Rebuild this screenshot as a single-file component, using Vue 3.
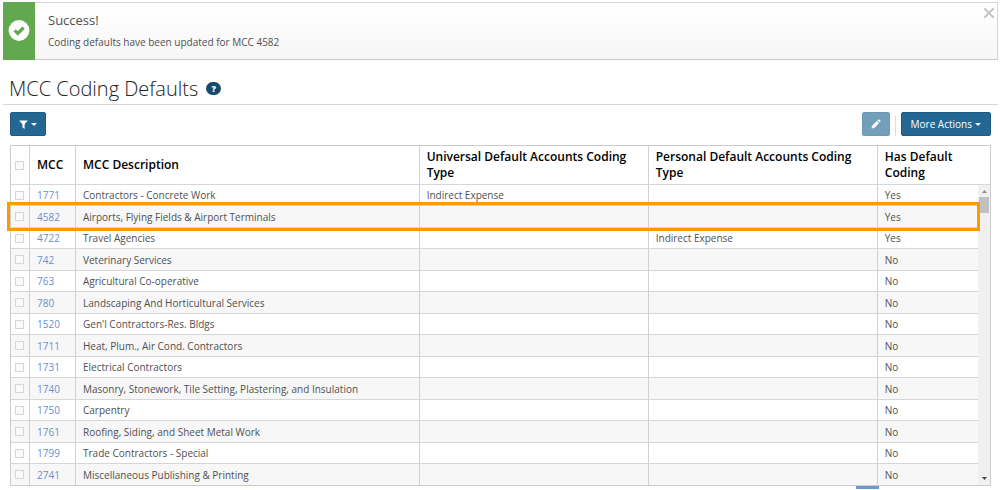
<script setup>
import { ref } from 'vue'

const rows = ref([
  { mcc: '1771', description: 'Contractors - Concrete Work', universal: 'Indirect Expense', personal: '', coded: 'Yes' },
  { mcc: '4582', description: 'Airports, Flying Fields & Airport Terminals', universal: '', personal: '', coded: 'Yes', highlighted: true },
  { mcc: '4722', description: 'Travel Agencies', universal: '', personal: 'Indirect Expense', coded: 'Yes' },
  { mcc: '742', description: 'Veterinary Services', coded: 'No' },
  { mcc: '763', description: 'Agricultural Co-operative', coded: 'No' },
  { mcc: '780', description: 'Landscaping And Horticultural Services', coded: 'No' },
  { mcc: '1520', description: "Gen'l Contractors-Res. Bldgs", coded: 'No' },
  { mcc: '1711', description: 'Heat, Plum., Air Cond. Contractors', coded: 'No' },
  { mcc: '1731', description: 'Electrical Contractors', coded: 'No' },
  { mcc: '1740', description: 'Masonry, Stonework, Tile Setting, Plastering, and Insulation', coded: 'No' },
  { mcc: '1750', description: 'Carpentry', coded: 'No' },
  { mcc: '1761', description: 'Roofing, Siding, and Sheet Metal Work', coded: 'No' },
  { mcc: '1799', description: 'Trade Contractors - Special', coded: 'No' },
  { mcc: '2741', description: 'Miscellaneous Publishing & Printing', coded: 'No' },
])
</script>

<template>
  <main class="page">
    <section class="alert" role="status">
      <div class="alert-badge">
        <svg width="22" height="22" viewBox="0 0 22 22" aria-hidden="true">
          <circle cx="11" cy="10.5" r="10.4" fill="#fff" />
          <path d="M6.6 10.4 9.8 13.5 15.6 7.7" fill="none" stroke="#62a84f" stroke-width="3.2" />
        </svg>
      </div>
      <div class="alert-text">
        <strong class="alert-title">Success!</strong>
        <p class="alert-message">Coding defaults have been updated for MCC 4582</p>
      </div>
      <button class="alert-close" type="button" aria-label="Dismiss">
        <svg width="12" height="12" viewBox="0 0 12 12" aria-hidden="true">
          <path d="M1.2 1.2 10.8 10.8M10.8 1.2 1.2 10.8" stroke="#c6c6c6" stroke-width="2" />
        </svg>
      </button>
    </section>

    <header class="heading">
      <h1>MCC Coding Defaults</h1>
      <button class="help" type="button" aria-label="Help">?</button>
    </header>

    <div class="toolbar">
      <button class="btn filter" type="button" aria-label="Filter">
        <svg width="9" height="9" viewBox="0 0 9 9" aria-hidden="true">
          <path d="M.2.5h8.6L5.6 4.2V9L3.4 7.2v-3z" fill="#fff" />
        </svg>
        <svg class="caret" width="6" height="3" viewBox="0 0 6 3" aria-hidden="true"><path d="M0 0h6L3 3z" fill="#fff" /></svg>
      </button>
      <div class="actions">
        <button class="btn edit" type="button" aria-label="Edit" disabled>
          <svg width="10" height="10" viewBox="0 0 10 10" aria-hidden="true">
            <path d="M.5 9.5 1 6.9 5.8 2.1l2.1 2.1L3.1 9zM6.4 1.5 7.3.6q.4-.4.9 0L9.4 1.8q.4.5 0 .9l-.9.9z" fill="#fff" />
          </svg>
        </button>
        <span class="divider"></span>
        <button class="btn more" type="button">
          More Actions
          <svg class="caret" width="6" height="3" viewBox="0 0 6 3" aria-hidden="true"><path d="M0 0h6L3 3z" fill="#fff" /></svg>
        </button>
      </div>
    </div>

    <div class="grid">
      <table>
        <colgroup>
          <col class="col-check" />
          <col class="col-mcc" />
          <col class="col-description" />
          <col class="col-type" />
          <col class="col-type" />
          <col class="col-coded" />
        </colgroup>
        <thead>
          <tr>
            <th class="check"><input type="checkbox" aria-label="Select all" /></th>
            <th>MCC</th>
            <th>MCC Description</th>
            <th>Universal Default Accounts Coding Type</th>
            <th>Personal Default Accounts Coding Type</th>
            <th>Has Default Coding</th>
          </tr>
        </thead>
        <tbody>
          <tr v-for="row in rows" :key="row.mcc" :class="{ highlighted: row.highlighted }">
            <td class="check"><input type="checkbox" :aria-label="'Select ' + row.mcc" /></td>
            <td><a href="#">{{ row.mcc }}</a></td>
            <td>{{ row.description }}</td>
            <td>{{ row.universal }}</td>
            <td>{{ row.personal }}</td>
            <td>{{ row.coded }}</td>
          </tr>
        </tbody>
      </table>
      <div class="scrollbar" aria-hidden="true">
        <svg width="5" height="3" viewBox="0 0 5 3"><path d="M0 3h5L2.5 0z" fill="#8c8c8c" /></svg>
        <span class="thumb"></span>
        <svg class="down" width="5" height="3" viewBox="0 0 5 3"><path d="M0 0h5L2.5 3z" fill="#444" /></svg>
      </div>
    </div>
    <div class="pager"><span class="pager-tab"></span></div>
  </main>
</template>

<style>
html,
body {
  background: #fff;
  overflow: hidden;
}
</style>

<style scoped>
.page {
  padding: 2px 2px 0 3px;
  font-family: "Open Sans", "Noto Sans", sans-serif;
  font-size: 10px;
  line-height: 14px;
  color: #505050;
}
button {
  font-family: inherit;
  border: 0;
  padding: 0;
  cursor: pointer;
}
svg {
  display: block;
}
.alert {
  display: flex;
  border: 1px solid #d5d5d5;
  border-bottom-color: #c8c8c8;
  border-left: 0;
  background: linear-gradient(#fff, #f6f6f6);
}
.alert-badge {
  display: flex;
  align-items: center;
  justify-content: center;
  width: 32px;
  margin: -1px 0;
  background: #62a84f;
}
.alert-text {
  flex: 1;
  padding: 8px 13px 10px;
}
.alert-title {
  display: block;
  font-size: 13px;
  font-weight: 400;
  line-height: 18px;
}
.alert-message {
  margin: 6px 0 0;
  line-height: 14px;
}
.alert-close {
  align-self: flex-start;
  margin: 4px 2px 0 0;
  background: none;
}
.heading {
  display: flex;
  align-items: center;
  gap: 8px;
  padding: 13px 6px 0;
  height: 31px;
  border-bottom: 1px solid #d8d8d8;
}
h1 {
  margin: 0;
  font-size: 20px;
  font-weight: 300;
  line-height: 30px;
  color: #222;
}
.help {
  width: 15px;
  height: 13px;
  border-radius: 7px;
  background: #17496b;
  color: #fff;
  font-size: 9px;
  font-weight: 800;
  line-height: 13px;
}
.toolbar {
  display: flex;
  justify-content: space-between;
  padding: 7px 7px 9px;
}
.btn {
  display: flex;
  align-items: center;
  justify-content: center;
  gap: 3px;
  box-sizing: border-box;
  height: 24px;
  border: 1px solid #1d5a84;
  border-radius: 2px;
  background: #236792;
  color: #fff;
  font-size: 10px;
}
.filter {
  width: 36px;
}
.actions {
  display: flex;
  align-items: center;
}
.edit {
  width: 28px;
  background: #739fbb;
  border-color: #6c99b6;
}
.divider {
  width: 1px;
  height: 20px;
  margin: 3px 5px 0 5px;
  background: #ddd;
}
.more {
  padding: 0 9px;
}
.grid {
  position: relative;
  margin: 0 7px;
  border: 1px solid #ccc;
}
table {
  width: 100%;
  table-layout: fixed;
  border-collapse: separate;
  border-spacing: 0;
}
.col-check {
  width: 19px;
}
.col-mcc {
  width: 46px;
}
.col-description {
  width: 35.1%;
}
.col-type {
  width: 23.4%;
}
th,
td {
  padding: 0 7px;
  border-right: 1px solid #d0d0d0;
  border-bottom: 1px solid #d6d6d6;
  text-align: left;
}
th:last-child,
td:last-child {
  border-right: 0;
}
tbody tr:last-child td {
  border-bottom: 0;
}
th {
  height: 38px;
  font-size: 12px;
  font-weight: 600;
  line-height: 16px;
  color: #000;
}
td {
  height: 20px;
}
tbody tr {
  position: relative;
}
tbody tr:nth-child(even) {
  background: #f7f7f7;
}
tbody tr:nth-child(even) td {
  height: 21px;
}
.check {
  padding: 0 5px 0 4px;
}
input {
  display: block;
  appearance: none;
  box-sizing: border-box;
  width: 9px;
  height: 9px;
  margin: 0;
  border: 1px solid #d6d6d6;
  background: #fafafa;
}
a {
  color: #6a8fce;
  text-decoration: none;
}
.highlighted .check::after {
  content: "";
  position: absolute;
  z-index: 1;
  inset: -4px 10px -3px -4px;
  border: 3px solid #f90;
  pointer-events: none;
}
.scrollbar {
  position: absolute;
  top: 39px;
  right: 0;
  bottom: 0;
  width: 12px;
  display: flex;
  flex-direction: column;
  align-items: center;
  padding: 5px 0;
  box-sizing: border-box;
  background: #f0f0f0;
}
.thumb {
  width: 10px;
  height: 16px;
  margin-top: 4px;
  background: #c1c1c1;
}
.down {
  margin-top: auto;
}
.pager {
  display: flex;
  justify-content: flex-end;
  padding-right: 119px;
}
.pager-tab {
  width: 23px;
  height: 3px;
  background: #6c9bd2;
}
</style>
